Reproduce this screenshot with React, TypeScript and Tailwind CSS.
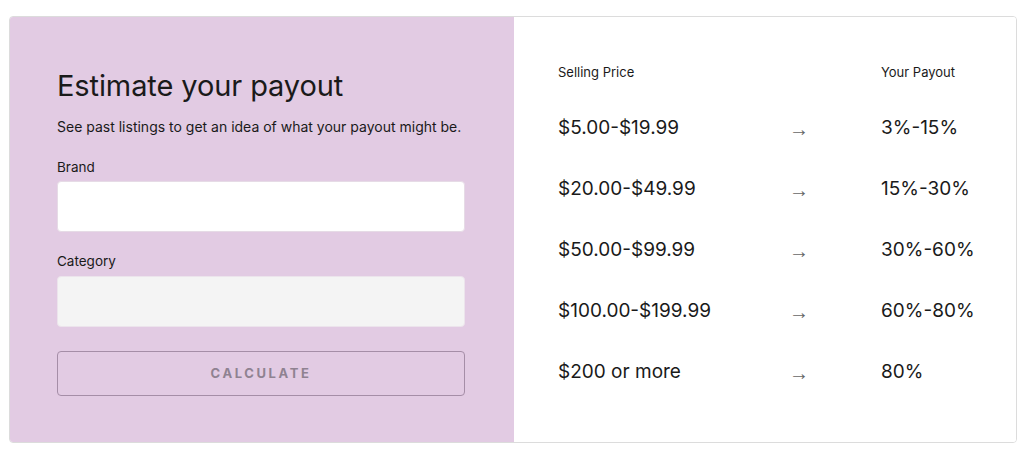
const rows = [
  { price: "$5.00-$19.99", payout: "3%-15%" },
  { price: "$20.00-$49.99", payout: "15%-30%" },
  { price: "$50.00-$99.99", payout: "30%-60%" },
  { price: "$100.00-$199.99", payout: "60%-80%" },
  { price: "$200 or more", payout: "80%" },
]

export default function App() {
  return (
    <div className="w-[1024px] h-[452px] bg-white pt-4 pl-[9px] font-['Inter',sans-serif] text-[#1a1a1a]">
      <div className="flex w-[1008px] h-[427px] rounded-[4px] border border-[#dcdcdc] overflow-hidden">
        <div className="w-[504px] shrink-0 bg-[#e2cbe3] pl-[47px] pr-12 pt-[51px]">
          <h2 className="text-[29px] leading-[36px] tracking-[-0.1px] font-normal">Estimate your payout</h2>
          <p className="mt-[14px] text-[14px] leading-[18px]">
            See past listings to get an idea of what your payout might be.
          </p>
          <label className="block mt-[22px] text-[13.5px] leading-[18px]">Brand</label>
          <div className="mt-[5px] h-[51px] w-[408px] rounded-[4px] bg-white border border-[#e6dbe6]" />
          <label className="block mt-[20px] text-[13.5px] leading-[18px]">Category</label>
          <div className="mt-[6px] h-[51px] w-[408px] rounded-[4px] bg-[#f4f4f4] border border-[#ece4ec]" />
          <button className="mt-[24px] h-[45px] w-[408px] rounded-[4px] border border-[#a58ea7] text-[13px] font-bold tracking-[2.6px] text-[#8f8291]">
            CALCULATE
          </button>
        </div>
        <div className="flex-1 bg-white pl-[44px] pt-[46px]">
          <div className="grid grid-cols-[232px_91px_auto] text-[13px] leading-[18px]">
            <span>Selling Price</span>
            <span />
            <span>Your Payout</span>
          </div>
          <div className="mt-[37px] flex flex-col gap-[41px]">
            {rows.map((r) => (
              <div key={r.price} className="grid h-5 grid-cols-[232px_91px_auto] text-[19px] leading-5 items-center">
                <span>{r.price}</span>
                <span className="h-5 -ml-[1px] font-['Liberation_Sans',sans-serif] text-[#666] text-[20px] leading-5 translate-y-[1px]">→</span>
                <span>{r.payout}</span>
              </div>
            ))}
          </div>
        </div>
      </div>
    </div>
  )
}
